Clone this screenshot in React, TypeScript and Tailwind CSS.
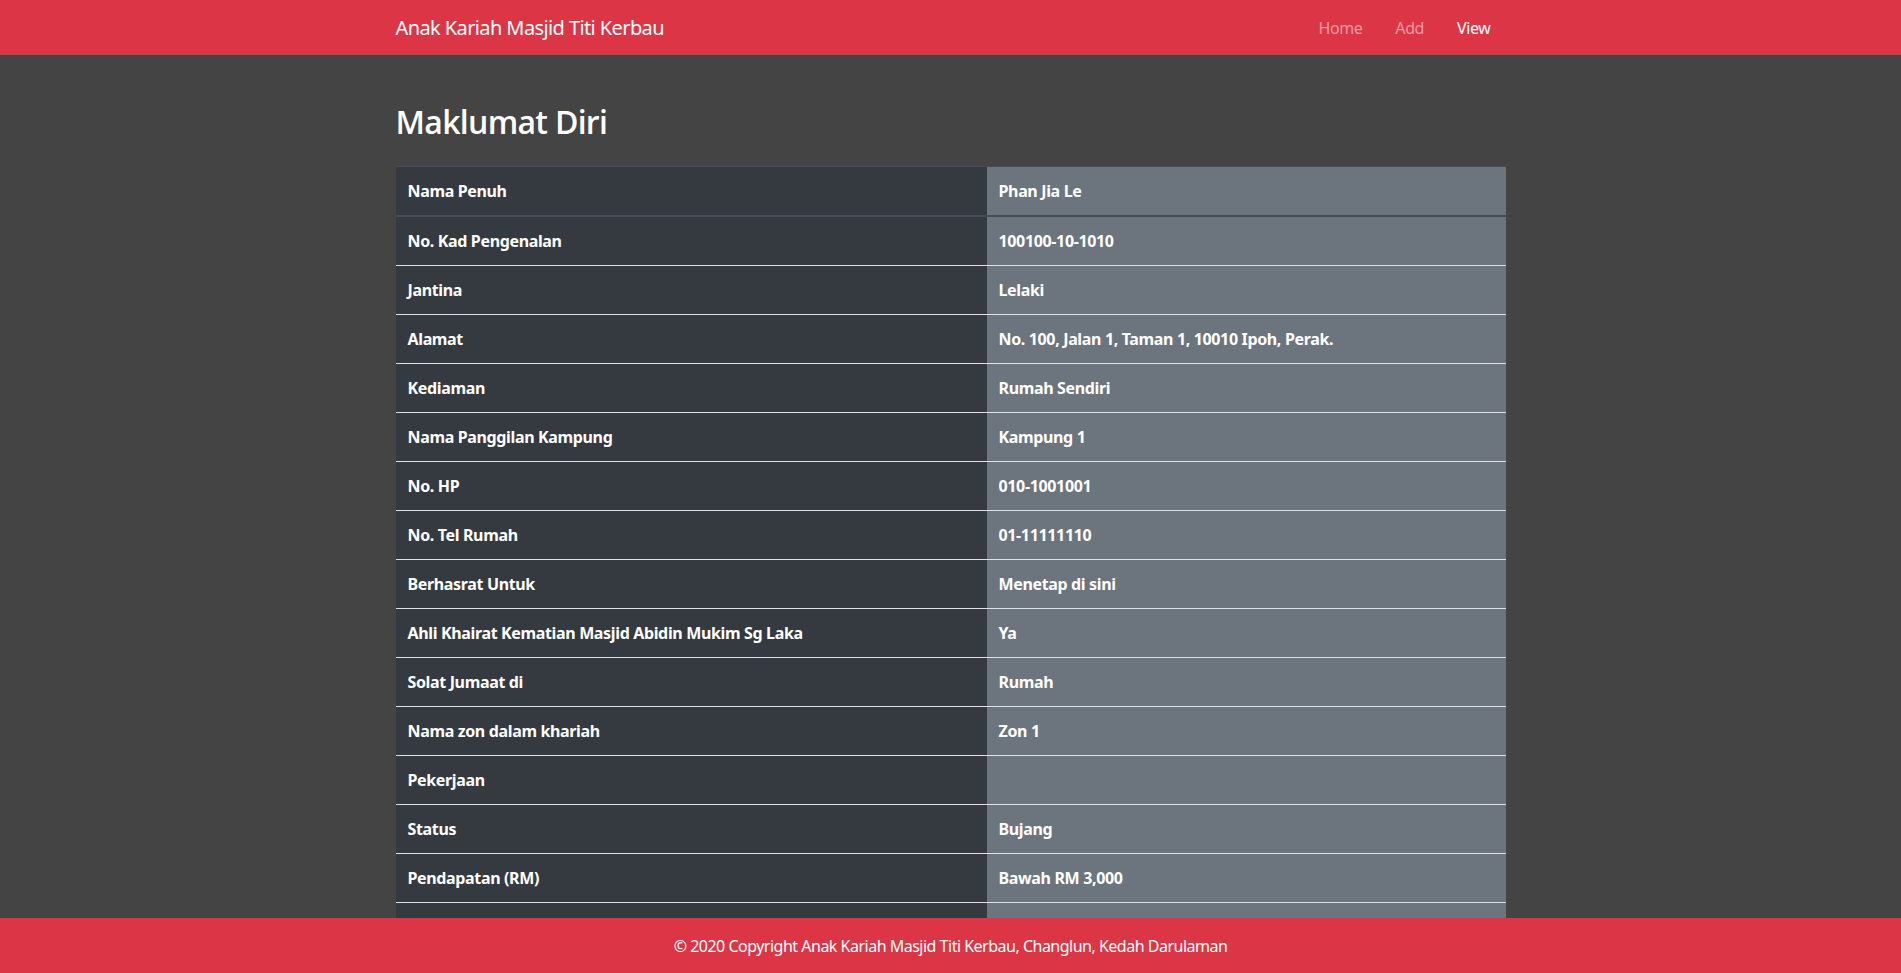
import React from "react";

const rows: [string, string][] = [
  ["Nama Penuh", "Phan Jia Le"],
  ["No. Kad Pengenalan", "100100-10-1010"],
  ["Jantina", "Lelaki"],
  ["Alamat", "No. 100, Jalan 1, Taman 1, 10010 Ipoh, Perak."],
  ["Kediaman", "Rumah Sendiri"],
  ["Nama Panggilan Kampung", "Kampung 1"],
  ["No. HP", "010-1001001"],
  ["No. Tel Rumah", "01-11111110"],
  ["Berhasrat Untuk", "Menetap di sini"],
  ["Ahli Khairat Kematian Masjid Abidin Mukim Sg Laka", "Ya"],
  ["Solat Jumaat di", "Rumah"],
  ["Nama zon dalam khariah", "Zon 1"],
  ["Pekerjaan", ""],
  ["Status", "Bujang"],
  ["Pendapatan (RM)", "Bawah RM 3,000"],
  ["Bilangan Tanggungan", "0"],
];

export default function App() {
  const font = { fontFamily: '"Noto Sans", "Open Sans", sans-serif' };
  return (
    <div className="min-h-screen bg-[#444444] text-white pb-[60px]" style={font}>
      <nav className="h-[55px] bg-[#dc3545]">
        <div className="mx-auto flex h-full w-[1110px] items-center justify-between">
          <span className="text-[20px] leading-[30px] tracking-[-0.6px] text-white">Anak Kariah Masjid Titi Kerbau</span>
          <ul className="mr-[15px] flex items-center gap-[33px] text-[16px] leading-[24px] tracking-[-0.4px]">
            <li className="text-white/50">Home</li>
            <li className="text-white/50">Add</li>
            <li className="text-white">View</li>
          </ul>
        </div>
      </nav>
      <main className="mx-auto w-[1110px] pt-[48px]">
        <h2
          className="text-[32px] font-semibold leading-[38px] tracking-[-0.7px]"
          style={{ fontFamily: '"Open Sans", "Noto Sans", sans-serif' }}
        >
          Maklumat Diri
        </h2>
        <table className="mt-[25px] w-full border-collapse text-[16px] font-bold leading-[24px] tracking-[-0.35px]">
          <tbody>
            {rows.map(([k, v], i) => {
              const border =
                i === 0
                  ? "border-t border-b-2 border-[#454d55]"
                  : "border-b border-[#dee2e6]";
              return (
                <tr key={k} className={border}>
                  <td className="w-[591px] bg-[#343a40] px-[12px] py-[12px] align-top">{k}</td>
                  <td className="bg-[#6c757d] px-[12px] py-[12px] align-top">{v}</td>
                </tr>
              );
            })}
          </tbody>
        </table>
      </main>
      <footer className="fixed bottom-0 left-0 right-0 flex h-[55px] items-center justify-center bg-[#dc3545] text-[16px] tracking-[-0.5px] text-white">
        © 2020 Copyright Anak Kariah Masjid Titi Kerbau, Changlun, Kedah Darulaman
      </footer>
    </div>
  );
}
